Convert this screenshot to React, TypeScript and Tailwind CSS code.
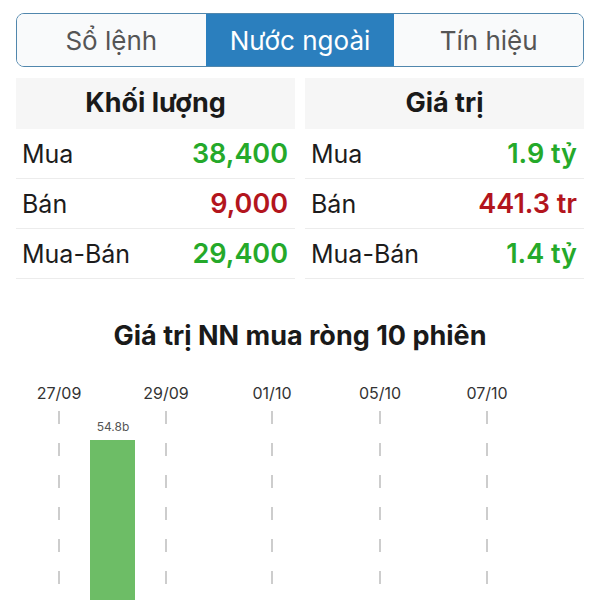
import React from 'react';

const tabs = ['Sổ lệnh', 'Nước ngoài', 'Tín hiệu'];

interface Row {
  label: string;
  value: string;
  up: boolean;
}

const volumeRows: Row[] = [
  { label: 'Mua', value: '38,400', up: true },
  { label: 'Bán', value: '9,000', up: false },
  { label: 'Mua-Bán', value: '29,400', up: true },
];

const valueRows: Row[] = [
  { label: 'Mua', value: '1.9 tỷ', up: true },
  { label: 'Bán', value: '441.3 tr', up: false },
  { label: 'Mua-Bán', value: '1.4 tỷ', up: true },
];

const dates = [
  { label: '27/09', x: 59 },
  { label: '29/09', x: 166 },
  { label: '01/10', x: 272 },
  { label: '05/10', x: 380 },
  { label: '07/10', x: 487 },
];

function StatTable({ title, rows }: { title: string; rows: Row[] }) {
  return (
    <div className="flex-1 flex flex-col">
      <div className="h-[51px] bg-[#f6f6f6] flex items-center justify-center text-[27px] font-bold text-[#1a1a1a]">
        {title}
      </div>
      {rows.map((r) => (
        <div key={r.label} className="h-[50px] flex items-center justify-between pl-[6px] pr-[7px] pt-[2px] border-b border-[#ececec]">
          <span className="text-[25px] text-[#1c1c1c]">{r.label}</span>
          <span className={`text-[27px] font-semibold ${r.up ? 'text-[#25a92a]' : 'text-[#b3151d]'}`}>{r.value}</span>
        </div>
      ))}
    </div>
  );
}

export default function App() {
  return (
    <div className="w-[600px] h-[600px] bg-white overflow-hidden font-['Inter','Noto_Sans',sans-serif]">
      <div className="px-4 pt-[13px]">
        {/* segmented tabs */}
        <div className="h-[54px] flex border-[1.5px] border-[#5187ad] rounded-[8px] overflow-hidden">
          {tabs.map((t, i) => (
            <div
              key={t}
              className={`flex-1 flex items-center justify-center text-[26px] ${
                i === 1 ? 'bg-[#2b7fbe] text-white' : 'bg-[#f9fafb] text-[#555]'
              }`}
            >
              {t}
            </div>
          ))}
        </div>

        {/* foreign trade stats */}
        <div className="flex gap-[10px] mt-[11px]">
          <StatTable title="Khối lượng" rows={volumeRows} />
          <StatTable title="Giá trị" rows={valueRows} />
        </div>
      </div>

      <div className="mt-[41px] h-[32px] leading-[32px] text-center text-[27px] font-bold text-[#1a1a1a]">
        Giá trị NN mua ròng 10 phiên
      </div>

      {/* chart */}
      <svg width="600" height="240" className="block mt-[18px]" viewBox="0 370 600 240">
        {dates.map((d) => (
          <g key={d.label}>
            <text x={d.x} y={399} textAnchor="middle" fontSize="16" fill="#333" fontFamily="Inter, sans-serif">
              {d.label}
            </text>
            <line x1={d.x} y1={411} x2={d.x} y2={610} stroke="#bdbdbd" strokeWidth="1.5" strokeDasharray="13 19" />
          </g>
        ))}
        <rect x="90" y="440" width="45" height="170" fill="#6dbd66" />
        <text x="113" y="431" textAnchor="middle" fontSize="12" fill="#555" fontFamily="Inter, sans-serif">
          54.8b
        </text>
      </svg>
    </div>
  );
}
